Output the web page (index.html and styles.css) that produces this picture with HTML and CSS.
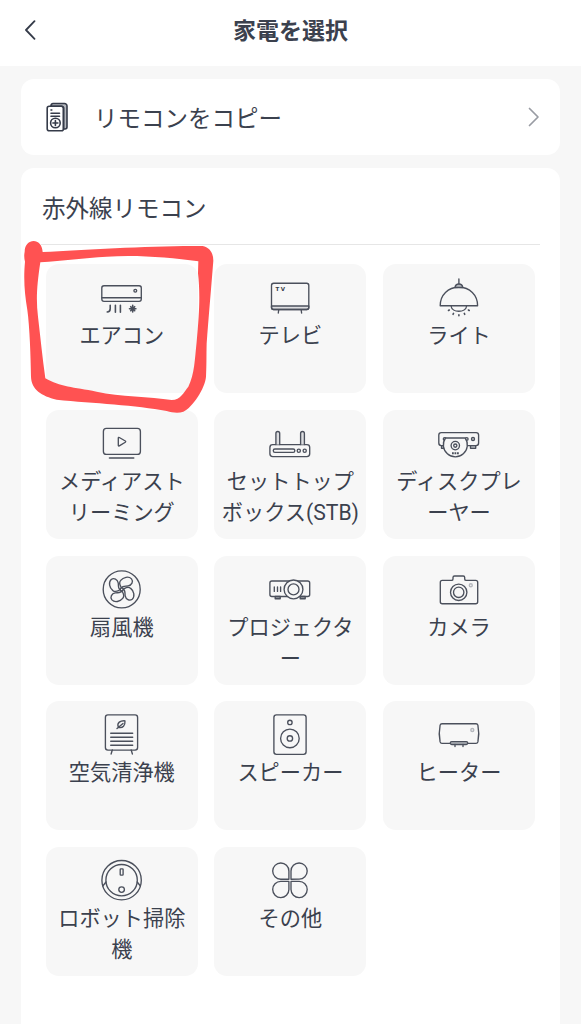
FILE: index.html
```html
<!DOCTYPE html>
<html lang="ja">
<head>
<meta charset="utf-8">
<title>家電を選択</title>
<link rel="stylesheet" href="styles.css">
</head>
<body>
<header class="header">
  <svg class="back" viewBox="0 0 12 20"><path d="M10.500 1.200 2 10l8.500 8.800"/></svg>
  <h1 class="title">家電を選択</h1>
</header>
<main class="content">
  <section class="card copy">
    <svg class="copy-icon" viewBox="0 0 22 30">
      <path class="shade" d="M17.500 5.500V27h1.500a2 2 0 0 0 2-2V4a2.500 2.500 0 0 0-2.500-2.500H7a2 2 0 0 0-2 2v.8h11z"/>
      <rect x="1.200" y="4.300" width="16.300" height="24.400" rx="2"/>
      <path d="M5 8h.8M5 11.300h8.500M5 14.200h8.500"/>
      <circle cx="9.400" cy="21" r="4.800"/>
      <path d="M9.400 18.500v5M6.900 21h5"/>
    </svg>
    <span class="copy-text">リモコンをコピー</span>
    <svg class="next" viewBox="0 0 12 20"><path d="M1.500 1.500 10 10l-8.500 8.500"/></svg>
  </section>
  <section class="card remotes">
    <h2 class="heading">赤外線リモコン</h2>
    <div class="grid">
      <div class="cell">
        <svg class="icon" viewBox="0 0 44 44"><rect x="1.800" y="9.700" width="39.500" height="15.600" rx="2.200"/><path d="M2 21.700h39"/><path class="thick" d="M10.200 29.300v3.500q0 3-3 3.200M15.400 29.300v6.900M20.400 29.300v6.900M32.700 29.400v6.600M29.500 32.700h6.400M30.700 30.700l4 4M34.700 30.700l-4 4"/><circle cx="35.300" cy="14.700" r="1.400"/></svg>
        <span class="label">エアコン</span>
      </div>
      <div class="cell">
        <svg class="icon" viewBox="0 0 44 44"><path class="pale" d="M3.500 30h37.300v1.500q0 2-2 2H5.500q-2 0-2-2z"/><rect x="3.500" y="7.200" width="37.300" height="26.300" rx="2.200"/><path d="M10.700 34l-.4 3M33.200 34l.4 3"/><text class="tv" x="7.600" y="15" textLength="9.400">TV</text></svg>
        <span class="label">テレビ</span>
      </div>
      <div class="cell">
        <svg class="icon" viewBox="0 0 44 44"><path d="M3.200 29.700C3.200 19 11 11.300 21.900 11.300S40.600 19 40.600 29.700zM21.900 3v5M14 30c1 7 14.700 7 15.700 0"/><path class="shade" d="M18 11.500q.5-3.500 3.900-3.500t3.900 3.500z"/><path class="thick" d="M11.500 34.500l.8-.5M16.100 38.300l.4-.9M21.900 38.700v1M27.700 38.300l-.4-.9M32.200 34.500l-.8-.5"/></svg>
        <span class="label">ライト</span>
      </div>
      <div class="cell">
        <svg class="icon" viewBox="0 0 44 44"><rect x="3.400" y="6.400" width="37" height="26" rx="3"/><path d="M9.500 36h24.200" class="thick"/><path d="M18.300 16q0-1 1-.5l6 3.500q.8.600 0 1.200l-6 3.700q-1 .4-1-.6z"/></svg>
        <span class="label">メディアスト<br>リーミング</span>
      </div>
      <div class="cell">
        <svg class="icon" viewBox="0 0 44 44"><rect x="1.900" y="22.600" width="39.800" height="12" rx="2.800"/><path class="pale" d="M7.900 22.600V11.500q0-2 1.900-2t1.900 2v11.100M32.600 22.600V11.500q0-2 1.900-2t1.900 2v11.100"/><rect x="5.300" y="27" width="21.500" height="3.300" rx="1.600"/><circle cx="30.800" cy="28.700" r="1.600"/><circle cx="36.700" cy="28.700" r="1.600"/></svg>
        <span class="label">セットトップ<br>ボックス(STB)</span>
      </div>
      <div class="cell">
        <svg class="icon" viewBox="0 0 44 44"><rect x="1.800" y="10.600" width="39.800" height="13" rx="2.500"/><path class="shade" d="M33.500 23.600h5.200v2.700h-5.200zM4.500 23.600h3v2.700h-3z"/><circle cx="7.700" cy="17" r="1.400"/><circle cx="29.700" cy="17" r="1.400"/><circle cx="36" cy="17" r="1.500"/><path class="paper" d="M8.500 16h19.700a12 12 0 1 1-19.700 0z"/><circle cx="18.300" cy="23.600" r="4.200"/><circle cx="18.300" cy="23.600" r="1.600"/><path class="dots" d="M15 31.200h7"/></svg>
        <span class="label">ディスクプレ<br>ーヤー</span>
      </div>
      <div class="cell">
        <svg class="icon" viewBox="0 0 44 44"><circle cx="21.700" cy="21.400" r="18.500"/>
          <g transform="translate(21.700 21.400)"><path id="blade" d="M-.2-1.500C-1.500-4-3.500-6.200-1-9C1.500-12.200 7-13.500 9.800-10.500C12-7.800 10-4.200 6.500-3.500C4-3 1-4-.2-1.500z"/><use href="#blade" transform="rotate(90)"/><use href="#blade" transform="rotate(180)"/><use href="#blade" transform="rotate(270)"/><circle r="1.500"/></g></svg>
        <span class="label">扇風機</span>
      </div>
      <div class="cell">
        <svg class="icon" viewBox="0 0 44 44"><path class="shade" d="M7.200 28.500h5v2.200h-5zM32.200 28.500h5v2.200h-5z"/><rect x="1.900" y="13" width="39.800" height="15.500" rx="2"/><circle class="paper" cx="25.500" cy="21.400" r="9.400"/><circle cx="25.500" cy="21.400" r="5.500"/><path d="M6.300 18.900v4.500M9.500 18.900v4.500M12.600 18.900v4.500"/></svg>
        <span class="label">プロジェクタ<br>ー</span>
      </div>
      <div class="cell">
        <svg class="icon" viewBox="0 0 44 44"><path d="M5.300 12.400h9.200q1.500 0 1.500-1.500V9.500Q16 8 17.500 8h8.700q1.500 0 1.500 1.500v1.400q0 1.500 1.500 1.500h9.500q2 0 2 2v19.300q0 2-2 2H5.300q-2 0-2-2V14.400q0-2 2-2z"/><circle cx="21.700" cy="24.300" r="8.200"/><circle cx="21.700" cy="24.300" r="5.200"/><circle class="faint" cx="33.800" cy="17.200" r="1.500"/></svg>
        <span class="label">カメラ</span>
      </div>
      <div class="cell">
        <svg class="icon" viewBox="0 0 44 44"><rect x="5.400" y="1.900" width="32.200" height="35.200" rx="2.500"/><path d="M10.700 20.200h22M10.700 24.200h22M10.700 28.200h22M10.700 32.200h22M12.300 37l-1.200 4M31.200 37l1.200 4M17 15.500l6-5M18.300 14.300C16.500 9.500 20.500 7.500 25 7.800C25.300 12.500 23 15.500 18.300 14.300z"/></svg>
        <span class="label">空気清浄機</span>
      </div>
      <div class="cell">
        <svg class="icon" viewBox="0 0 44 44"><rect x="5.900" y="1.900" width="32.200" height="39.400" rx="2.500"/><circle cx="21.900" cy="9.400" r="2.200"/><circle cx="21.900" cy="25.400" r="9.300"/><circle cx="21.900" cy="25.400" r="2.700"/></svg>
        <span class="label">スピーカー</span>
      </div>
      <div class="cell">
        <svg class="icon" viewBox="0 0 44 44"><path d="M5 10.700h34q1.500 0 1.900 1.500 1.700 8.400 0 16.700-.4 1.500-1.900 1.500H5q-1.500 0-1.900-1.500-1.700-8.300 0-16.700.4-1.500 1.900-1.500z"/><rect class="shade" x="13.300" y="28.600" width="17.400" height="2.900" rx="1.400"/><path d="M18 31.500v2M26 31.500v2"/><circle class="faint" cx="35.300" cy="17" r="1.500"/></svg>
        <span class="label">ヒーター</span>
      </div>
      <div class="cell">
        <svg class="icon" viewBox="0 0 44 44"><circle cx="21.600" cy="21.200" r="19.700"/><circle cx="21.600" cy="21.200" r="15.700"/><rect x="20.200" y="9.800" width="2.900" height="6.300" rx=".6"/><circle cx="21.600" cy="30.600" r="2.800"/><path d="M6 23l-3.200 4M37.200 23l3.200 4"/></svg>
        <span class="label">ロボット掃除<br>機</span>
      </div>
      <div class="cell">
        <svg class="icon" viewBox="0 0 44 44"><path d="M20.900 20.200h-8.200A8.100 8.100 0 1 1 20.900 12zM23 20.200V12a8.100 8.100 0 1 1 8.200 8.200zM20.900 22.400v8.200a8.100 8.100 0 1 1-8.200-8.200zM23 22.400h8.200a8.100 8.100 0 1 1-8.200 8.200z"/></svg>
        <span class="label">その他</span>
      </div>
    </div>
  </section>
</main>
<svg class="marker" viewBox="0 0 600 570"><path fill-rule="evenodd" d="M14 65C14 24 66 20 68 66C200 60 400 46 548 48C568 52 580 68 580 92C573 180 565 270 560 340C559 380 560 400 558 440C555 475 518 532 490 545C475 550 458 548 440 543C350 525 220 520 110 509C65 498 34 478 33 440C32 380 29 290 22 240C14 190 10 150 15 95Q11 80 14 65zM61 97C50 170 48 210 54 260C61 320 67 380 76 445C120 470 160 472 230 485C300 500 390 500 455 510C482 510 492 485 505 470C524 430 524 390 530 335C538 250 541 190 534 130L535 94C450 82 350 74 260 80C190 84 130 92 61 97z"/></svg>
</body>
</html>
```
FILE: styles.css
```css
* { box-sizing: border-box; }

body {
  margin: 0;
  height: 1024px;
  overflow: hidden;
  display: flex;
  flex-direction: column;
  background: #f7f7f7;
  color: #3b414e;
  font-family: Roboto, "Noto Sans CJK JP", sans-serif;
}

svg {
  display: block;
  flex: none;
  fill: none;
  stroke: #4b505c;
  stroke-width: 1.35;
  stroke-linecap: round;
  stroke-linejoin: round;
}

.header {
  height: 66px;
  flex: none;
  display: grid;
  grid-template-columns: 40px 1fr 40px;
  align-items: center;
  padding: 0 0 7px;
  background: #fff;
}

.back {
  width: 12px;
  height: 20px;
  margin-left: 24px;
  stroke: #353b49;
  stroke-width: 1.8;
}

.title {
  margin: 0;
  padding-top: 4px;
  font-size: 23px;
  line-height: 34px;
  font-weight: 700;
  text-align: center;
}

.content {
  flex: 1;
  display: flex;
  flex-direction: column;
  gap: 13px;
  padding: 13px 21px 0;
}

.card {
  background: #fff;
  border-radius: 13px;
}

.copy {
  height: 76px;
  flex: none;
  display: flex;
  align-items: center;
  padding: 0 20px 0 25px;
}

.copy-icon {
  width: 22px;
  height: 30px;
  stroke: #353b49;
  stroke-width: 1.6;
}

.copy-text {
  flex: 1;
  margin-left: 26px;
  padding-top: 4px;
  font-size: 23.500px;
  line-height: 34px;
}

.next {
  width: 12px;
  height: 20px;
  stroke: #999ca3;
  stroke-width: 1.7;
}

.remotes {
  flex: 1;
  padding: 0 20px;
  border-radius: 13px 13px 0 0;
}

.heading {
  height: 77px;
  margin: 0;
  padding: 24px 0 0 1px;
  border-bottom: 1px solid #e6e6e6;
  font-size: 23.500px;
  line-height: 34px;
  font-weight: 400;
}

.grid {
  display: grid;
  grid-template-columns: repeat(3, 152px);
  grid-auto-rows: 129px;
  gap: 16.800px 16.600px;
  padding: 19px 4.800px 0;
}

.cell {
  display: flex;
  flex-direction: column;
  align-items: center;
  padding-top: 12px;
  border-radius: 13px;
  background: #f7f7f7;
}

.icon {
  width: 44px;
  height: 44px;
}

.label {
  font-size: 21.200px;
  line-height: 31px;
  text-align: center;
  white-space: nowrap;
}

.shade { fill: #b5b8be; }
.pale { fill: #dddee1; }
.paper { fill: #f7f7f7; }
.faint { stroke: #b5b8be; }
.thick { stroke-width: 1.6; }
.dots { stroke-width: 2; stroke-linecap: butt; stroke-dasharray: 1.800 .7; }

.tv {
  font: 700 5.500px "DejaVu Sans", sans-serif;
  fill: #353b49;
  stroke: none;
}

/* Hand-drawn highlight lying over the first tile */
.marker {
  position: absolute;
  left: 20px;
  top: 230px;
  width: 200px;
  height: 190px;
  fill: #ff5252;
  stroke: none;
}
```
